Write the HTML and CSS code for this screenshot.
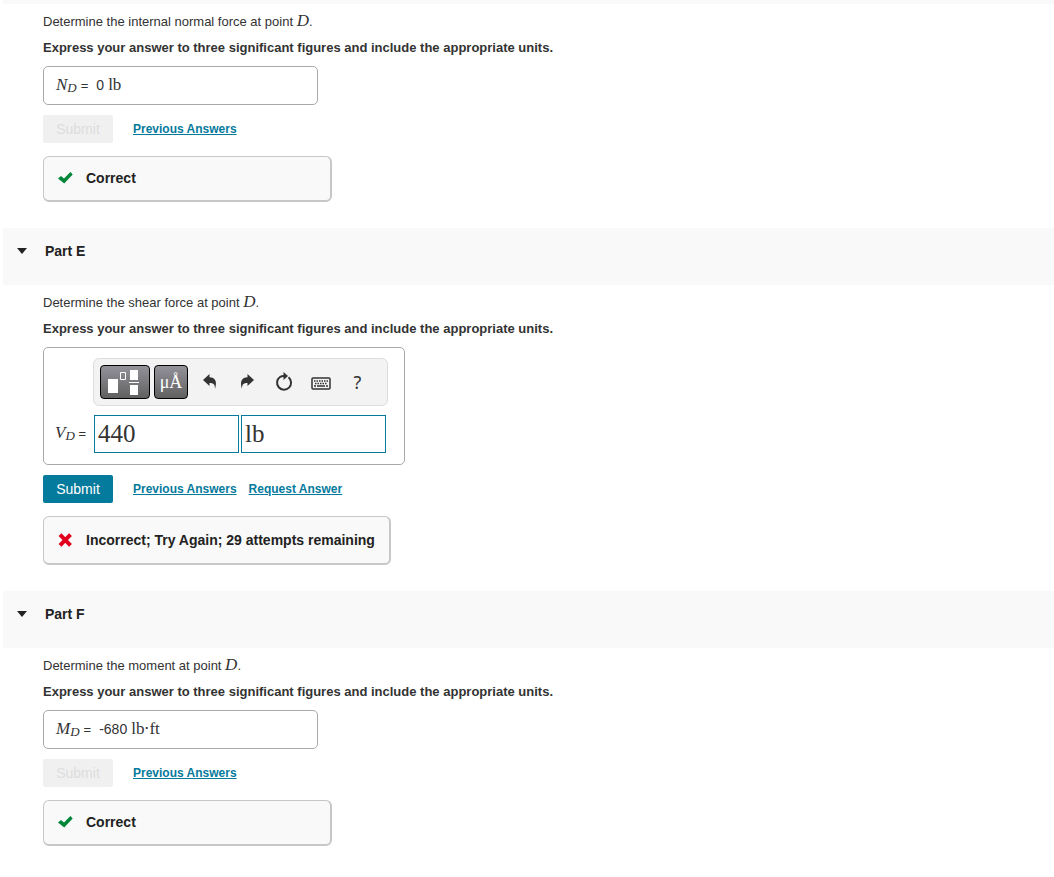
FILE: index.html
```html
<!DOCTYPE html>
<html lang="en">

<head>
    <meta charset="UTF-8">
    <meta name="viewport" content="width=device-width, initial-scale=1.0">
    <title>Internal Forces</title>
    <link rel="stylesheet" href="styles.css">
</head>

<body>
    <main class="problem">
        <section class="part">
            <div class="part-strip"></div>
            <div class="part-body">
                <p class="question">Determine the internal normal force at point <var>D</var>.</p>
                <p class="instructions">Express your answer to three significant figures and include the appropriate units.</p>
                <div class="answer-box">
                    <span class="symbol"><var>N<sub>D</sub></var></span>
                    <span class="equals">=</span>
                    <span class="value">0</span>
                    <span class="unit">lb</span>
                </div>
                <div class="actions">
                    <button class="submit-button" type="button" disabled>Submit</button>
                    <a class="action-link" href="#">Previous Answers</a>
                </div>
                <div class="feedback correct">
                    <svg class="feedback-icon" viewBox="0 0 16 14" aria-hidden="true">
                        <path fill="#008638" d="M0 7.500 3 5 6 7.500 12.400 1 14.700 3.400 6.200 12.500Z" />
                    </svg>
                    <span>Correct</span>
                </div>
            </div>
        </section>

        <section class="part">
            <div class="part-header">
                <span class="arrow"></span>
                <h2>Part E</h2>
            </div>
            <div class="part-body">
                <p class="question">Determine the shear force at point <var>D</var>.</p>
                <p class="instructions">Express your answer to three significant figures and include the appropriate units.</p>
                <form class="answer-form">
                    <div class="toolbar">
                        <button class="tool-button templates" type="button" aria-label="Templates">
                            <svg width="48" height="32" viewBox="0 0 48 32">
                                <path fill="#fff" d="M7 13h10v14H7zM29 4h8v10h-8zM29 19h8v10h-8zM28 16h10v1H28z" />
                                <path fill="none" stroke="#fff" d="M19.500 6.500h5v7h-5z" />
                            </svg>
                        </button>
                        <button class="tool-button symbols" type="button">μÅ</button>
                        <button class="icon-button" type="button" aria-label="Undo">
                            <svg width="16" height="16" viewBox="0 0 16 16">
                                <path fill="#333" d="M1 6 7.500 0v3.300c5.500 0 8 4 5.500 11.700C13.200 10.500 11.500 9 7.500 9v3Z" />
                            </svg>
                        </button>
                        <button class="icon-button" type="button" aria-label="Redo">
                            <svg width="16" height="16" viewBox="0 0 16 16">
                                <path fill="#333" d="M15 6 8.500 0v3.300C3 3.300.5 7.300 3 15 2.800 10.500 4.500 9 8.500 9v3Z" />
                            </svg>
                        </button>
                        <button class="icon-button" type="button" aria-label="Reset">
                            <svg width="18" height="20" viewBox="0 0 18 20">
                                <path fill="none" stroke="#333" stroke-width="2" d="M5 5A7 7 0 1 0 13.500 5.300M5 5Q6.500 4 9 4" />
                                <path fill="#333" d="M8.500 0v8L13 4Z" />
                            </svg>
                        </button>
                        <button class="icon-button" type="button" aria-label="Keyboard">
                            <svg width="20" height="20" viewBox="0 0 20 20">
                                <rect x="1" y="6" width="18" height="11" rx="1" fill="none" stroke="#333" stroke-width="1.500" />
                                <path stroke="#333" stroke-width="1.500" stroke-dasharray="1.500 1" d="M3 9h14M4 11.500h12.500" />
                                <path stroke="#333" stroke-width="1.500" d="M3 14h2M6 14h8M15 14h2" />
                            </svg>
                        </button>
                        <button class="icon-button help" type="button" aria-label="Help">?</button>
                    </div>
                    <div class="entry">
                        <label class="entry-label" for="shearValue"><var>V<sub>D</sub></var> <span>=</span></label>
                        <input class="entry-field" type="text" id="shearValue" name="shearValue" value="440">
                        <input class="entry-field" type="text" id="shearUnit" name="shearUnit" value="lb" aria-label="Units">
                    </div>
                </form>
                <div class="actions">
                    <button class="submit-button" type="button">Submit</button>
                    <a class="action-link" href="#">Previous Answers</a>
                    <a class="action-link" href="#">Request Answer</a>
                </div>
                <div class="feedback incorrect">
                    <svg class="feedback-icon" viewBox="0 0 16 14" aria-hidden="true">
                        <path fill="none" stroke="#e0001b" stroke-width="4" d="M2 1.700 12.500 12.300M12.500 1.700 2 12.300" />
                    </svg>
                    <span>Incorrect; Try Again; 29 attempts remaining</span>
                </div>
            </div>
        </section>

        <section class="part">
            <div class="part-header">
                <span class="arrow"></span>
                <h2>Part F</h2>
            </div>
            <div class="part-body">
                <p class="question">Determine the moment at point <var>D</var>.</p>
                <p class="instructions">Express your answer to three significant figures and include the appropriate units.</p>
                <div class="answer-box">
                    <span class="symbol"><var>M<sub>D</sub></var></span>
                    <span class="equals">=</span>
                    <span class="value">-680</span>
                    <span class="unit">lb⋅ft</span>
                </div>
                <div class="actions">
                    <button class="submit-button" type="button" disabled>Submit</button>
                    <a class="action-link" href="#">Previous Answers</a>
                </div>
                <div class="feedback correct">
                    <svg class="feedback-icon" viewBox="0 0 16 14" aria-hidden="true">
                        <path fill="#008638" d="M0 7.500 3 5 6 7.500 12.400 1 14.700 3.400 6.200 12.500Z" />
                    </svg>
                    <span>Correct</span>
                </div>
            </div>
        </section>
    </main>
</body>

</html>
```
FILE: styles.css
```css
* {
    box-sizing: border-box;
}

body {
    margin: 0;
    background: #fff;
    color: #333;
    font-family: "Liberation Sans", Arial, sans-serif;
    font-size: 13px;
    line-height: 16px;
}

.problem {
    margin-left: 3px;
}

/* Part headers */
.part-strip {
    height: 4px;
    background: #f9f9f9;
}

.part-header {
    display: flex;
    align-items: flex-start;
    gap: 18px;
    height: 57px;
    padding: 15px 14px;
    background: #f9f9f9;
}

.part-header h2 {
    margin: 0;
    color: #222;
    font-size: 14px;
    line-height: 16px;
}

.arrow {
    margin-top: 5px;
    border-left: 5px solid transparent;
    border-right: 5px solid transparent;
    border-top: 6px solid #222;
}

.part-body {
    padding: 10px 40px 26px;
}

.question,
.instructions {
    margin: 0 0 10px;
    line-height: 16px;
}

.instructions {
    font-weight: bold;
}

/* Math */
var,
.unit {
    font-family: "Liberation Serif", "Times New Roman", serif;
    font-size: 17px;
    line-height: 0;
}

sub {
    font-size: 13px;
    line-height: 0;
    vertical-align: -2px;
}

/* Answers */
.answer-box {
    display: flex;
    align-items: baseline;
    gap: 4px;
    width: 275px;
    height: 39px;
    padding: 10px 12px;
    border: 1px solid #aaa;
    border-radius: 5px;
}

.value {
    margin-left: 4px;
    font-size: 14px;
}

.answer-form {
    width: 362px;
    height: 118px;
    padding: 10px 16px 10px 11px;
    border: 1px solid #aaa;
    border-radius: 5px;
}

.toolbar {
    display: flex;
    align-items: center;
    gap: 4px;
    width: 295px;
    height: 48px;
    margin: 0 0 9px 38px;
    padding: 0 6px;
    background: #f3f3f3;
    border: 1px solid #ddd;
    border-radius: 6px;
}

.toolbar button {
    display: flex;
    align-items: center;
    justify-content: center;
    padding: 0;
}

.tool-button {
    width: 34px;
    height: 34px;
    border: 1px solid #000;
    border-radius: 4px;
    background: linear-gradient(#94929a, #606060);
    color: #fff;
    font-family: "Liberation Serif", "Times New Roman", serif;
    font-size: 18px;
}

.toolbar .templates {
    width: 50px;
}

.icon-button {
    width: 33px;
    height: 34px;
    border: none;
    background: none;
    color: #333;
}

.help {
    font-family: "Noto Sans", sans-serif;
    font-size: 18px;
}

.symbols {
    margin-right: 1px;
}

.entry {
    display: flex;
    align-items: center;
    gap: 2px;
}

.entry-label {
    width: 37px;
    white-space: nowrap;
}

.entry-field {
    width: 145px;
    height: 38px;
    padding: 0 3px;
    border: 1px solid #047a9c;
    color: #333;
    font-family: "Liberation Serif", "Times New Roman", serif;
    font-size: 25px;
}

/* Buttons and links */
.actions {
    display: flex;
    align-items: center;
    gap: 12px;
    margin: 10px 0 13px;
}

.submit-button {
    width: 70px;
    height: 28px;
    margin-right: 8px;
    padding: 0;
    border: none;
    border-radius: 2px;
    background: #047a9c;
    color: #fff;
    font-family: "Liberation Sans", Arial, sans-serif;
    font-size: 14px;
}

.submit-button:disabled {
    background: #f0f0f0;
    color: #ddd;
}

.action-link {
    color: #047a9c;
    font-size: 12px;
    font-weight: bold;
}

/* Feedback */
.feedback {
    display: flex;
    align-items: center;
    gap: 12px;
    width: 289px;
    height: 46px;
    padding: 0 14px;
    border: 1px solid #c7c7c7;
    border-right-width: 2px;
    border-bottom-width: 2px;
    border-radius: 6px;
    background: #f9f9f9;
    color: #222;
    font-size: 14px;
    font-weight: bold;
}

.feedback-icon {
    width: 16px;
    height: 14px;
}

.correct {
    padding-bottom: 2px;
}

.incorrect {
    width: 348px;
    height: 49px;
}
```
